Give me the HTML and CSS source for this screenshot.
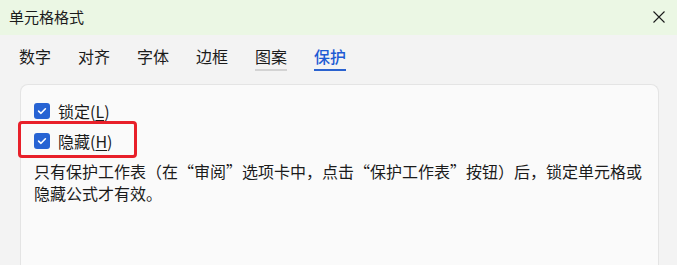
FILE: index.html
```html
<!DOCTYPE html>
<html lang="zh-CN">
<head>
<meta charset="utf-8">
<title>单元格格式</title>
<link rel="stylesheet" href="styles.css">
</head>
<body>
<div class="dialog">
  <div class="titlebar">
    <span class="title">单元格格式</span>
    <svg class="close" width="12" height="12" viewBox="0 0 12 12"><path d="M0.5 0.5 L11.5 11.5 M11.5 0.5 L0.5 11.5" stroke="#1b1b1b" stroke-width="1.1" fill="none"/></svg>
  </div>
  <div class="tabs">
    <span class="tab">数字</span>
    <span class="tab">对齐</span>
    <span class="tab">字体</span>
    <span class="tab">边框</span>
    <span class="tab hover">图案</span>
    <span class="tab active">保护</span>
  </div>
  <div class="panel">
    <label class="row">
      <span class="check"><svg width="16" height="16" viewBox="0 0 16 16"><path d="M4.6 8.1 L7 10.3 L11.4 5.8" stroke="#fff" stroke-width="1.6" fill="none" stroke-linecap="round" stroke-linejoin="round"/></svg></span>
      <span class="label">锁定(<u>L</u>)</span>
    </label>
    <label class="row marked">
      <span class="check"><svg width="16" height="16" viewBox="0 0 16 16"><path d="M4.6 8.1 L7 10.3 L11.4 5.8" stroke="#fff" stroke-width="1.6" fill="none" stroke-linecap="round" stroke-linejoin="round"/></svg></span>
      <span class="label">隐藏(<u>H</u>)</span>
      <span class="highlight"></span>
    </label>
    <p class="desc">只有保护工作表（在“审阅”选项卡中，点击“保护工作表”按钮）后，锁定单元格或隐藏公式才有效。</p>
  </div>
</div>
</body>
</html>
```

FILE: styles.css
```css
html, body {
  margin: 0;
  padding: 0;
  height: 100%;
  overflow: hidden;
}
body {
  background: #f3f3f3;
  font-family: "Noto Sans CJK SC", "Microsoft YaHei", sans-serif;
  color: #1b1b1b;
}
.dialog {
  display: flex;
  flex-direction: column;
  height: 100%;
}
.titlebar {
  height: 35px;
  flex: none;
  background: #ebf7e4;
  display: flex;
  align-items: center;
  justify-content: space-between;
  padding: 0 12px 0 9px;
}
.title {
  font-size: 15px;
  line-height: 20px;
  margin-top: -2px;
}
.close {
  display: block;
  margin-top: -2px;
}
.tabs {
  display: flex;
  gap: 27px;
  padding: 10px 0 0 19px;
  flex: none;
}
.tab {
  font-size: 16px;
  line-height: 22px;
  padding-bottom: 2px;
  border-bottom: 2px solid transparent;
}
.tab.hover {
  border-bottom-color: #d3d3d3;
}
.tab.active {
  color: #1e5bd4;
  font-weight: 500;
  border-bottom-color: #2a62cf;
}
.panel {
  margin: 13px 18px 0 20px;
  flex: 1;
  background: #fafafa;
  border: 1px solid #e4e4e4;
  border-bottom: none;
  border-radius: 8px 8px 0 0;
  padding: 11px 13px 0 13px;
}
.row {
  position: relative;
  display: flex;
  align-items: center;
  height: 30px;
  gap: 8px;
  font-size: 16px;
}
.check {
  width: 16px;
  height: 16px;
  border-radius: 3px;
  background: #2763d3;
  display: block;
}
.check svg {
  display: block;
}
.label u {
  text-underline-offset: 2px;
}
.highlight {
  position: absolute;
  left: -16px;
  top: -5px;
  width: 119px;
  height: 37px;
  box-sizing: border-box;
  border: 3px solid #e8202a;
  border-radius: 4px;
}
.desc {
  margin: 4px 0 0 0;
  font-size: 16px;
  line-height: 22px;
  width: 612px;
}
```
